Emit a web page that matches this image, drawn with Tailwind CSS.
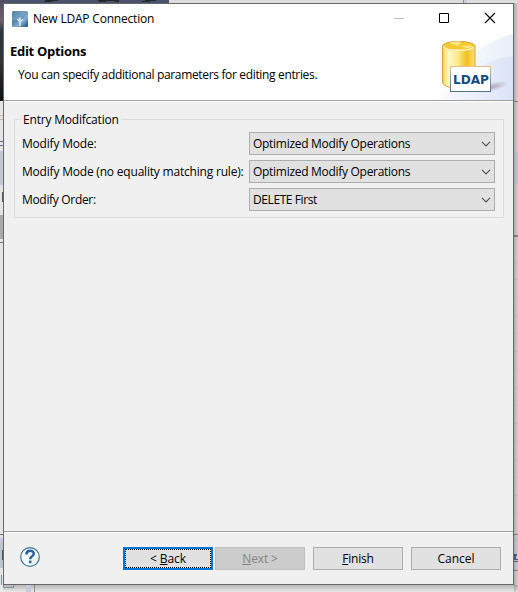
<!DOCTYPE html>
<html lang="en">
<head>
<meta charset="utf-8">
<title>New LDAP Connection</title>
<script src="https://cdn.jsdelivr.net/npm/@tailwindcss/browser@4"></script>
</head>
<body class="w-[518px] h-[592px] overflow-hidden relative bg-[#dcdcdc] font-['Open_Sans','Noto_Sans',sans-serif] text-[12px] leading-[16px] text-black">
<!-- desktop behind the dialog -->
<svg class="absolute inset-0" width="518" height="592" shape-rendering="crispEdges">
  <defs>
    <linearGradient id="sky" x1="0" x2="0" y1="0" y2="1"><stop offset="0" stop-color="#514c60"/><stop offset=".2" stop-color="#6e606b"/><stop offset=".32" stop-color="#29343b"/><stop offset=".6" stop-color="#343338"/><stop offset="1" stop-color="#0d1010"/></linearGradient>
    <linearGradient id="shade" x1="0" x2="1" y1="0" y2="0"><stop offset="0" stop-color="#000" stop-opacity=".16"/><stop offset="1" stop-color="#000" stop-opacity="0"/></linearGradient>
    <linearGradient id="shadeB" x1="0" x2="0" y1="0" y2="1"><stop offset="0" stop-color="#000" stop-opacity=".22"/><stop offset="1" stop-color="#000" stop-opacity="0"/></linearGradient>
  </defs>
  <path fill="#e9e9e9" d="M0 0h518v592H0z"/>
  <path fill="#48536b" d="M0 0h169v3H0z"/>
  <path fill="#25272b" d="M46 0h12v1h-6v1h-9zM97 0h22v2h-4v-1h-9v1h-7zM146 0h10v1h-6v1h-9z"/>
  <path fill="url(#sky)" d="M0 0h4v101H0z"/>
  <path fill="#ddd" d="M169 0h349v3H169z"/>
  <path fill="#8e8e96" d="M463 0h1v3h-1z"/><path fill="#c9cbd8" d="M464 0h3v3h-3z"/>
  <path fill="#e4e4e4" d="M0 102h3v490H0z"/>
  <path fill="#c8bca8" d="M0 115h3v1H0zM0 119h3v1H0z"/><path fill="#687181" d="M0 141h3v1H0zM0 145h3v1H0z"/>
  <path fill="#c3c7d4" d="M0 151h3v34H0z"/>
  <path fill="#555" d="M2 192h1v10H2z"/><path fill="#a9a9a9" d="M0 215h3v24H0z"/><path fill="#777" d="M0 242h3v1H0zM0 534h3v1H0z"/>
  <path fill="#c8cada" d="M0 538h3v5H0z"/><path fill="#b9c4cd" d="M0 543h3v25H0z"/><path fill="#555" d="M2 550h1v10H2z"/>
  <path fill="#d0d0d0" d="M514 3h4v589h-4z"/>
  <path fill="#8a8a8a" d="M514 101h4v1h-4zM514 235h4v2h-4zM514 534h4v1h-4zM514 570h4v1h-4z"/>
  <path fill="#c6cad8" d="M514 151h4v33h-4zM514 538h4v4h-4z"/>
  <path fill="#c3c3c3" d="M514 262h4v1h-4zM514 279h4v1h-4zM514 297h4v1h-4zM514 315h4v1h-4zM514 333h4v1h-4zM514 351h4v1h-4zM514 369h4v1h-4zM514 387h4v1h-4zM514 405h4v1h-4zM514 423h4v1h-4zM514 441h4v1h-4zM514 459h4v1h-4zM514 477h4v1h-4zM514 495h4v1h-4zM514 513h4v1h-4z"/>
  <path fill="#c9cad7" d="M514 543h4v27h-4z"/>
  <path fill="#4b6696" d="M514 554h3v2h-1v3h2v1h-4zM514 561h4v1h-4z"/>
  <path fill="#e9e9e9" d="M0 585h518v7H0z"/>
  <path fill="url(#shade)" d="M514 3h4v589h-4z"/><path fill="url(#shadeB)" d="M3 585h515v7H3z"/>
  <path fill="#c5c8d8" d="M26 585h5v7h-5z"/><path fill="#858585" d="M34 585h1v7h-1z"/>
  <path fill="none" stroke="#7b929d" d="M1.500 575v10M3.500 585v2.500h10v-3"/>
</svg>

<main class="absolute left-[3px] top-[3px] w-[511px] h-[582px] border border-[#68686a] bg-[#f0f0f0] flex flex-col">
  <header class="relative h-[96px] bg-white flex flex-col shrink-0">
    <svg class="absolute right-0 top-0" width="150" height="96" viewBox="363 4 150 96">
      <defs>
        <linearGradient id="w1" x1="0" x2="1" y1="0" y2="0"><stop offset="0" stop-color="#fff"/><stop offset="1" stop-color="#e9effa"/></linearGradient>
        <linearGradient id="w2" x1="0" x2="1" y1="0" y2="0"><stop offset="0" stop-color="#f8faff"/><stop offset="1" stop-color="#dbe3f6"/></linearGradient>
        <linearGradient id="gold" x1="0" x2="1" y1="0" y2="0"><stop offset="0" stop-color="#f7c93c"/><stop offset=".08" stop-color="#fbe589"/><stop offset=".2" stop-color="#fff9c6"/><stop offset=".48" stop-color="#fbe98a"/><stop offset=".75" stop-color="#f2bf1c"/><stop offset="1" stop-color="#fbe27a"/></linearGradient>
        <linearGradient id="edge" x1="0" x2="0" y1="0" y2="1"><stop offset="0" stop-color="#e9bd92"/><stop offset=".5" stop-color="#8a9a9e"/><stop offset="1" stop-color="#4f7382"/></linearGradient>
        <radialGradient id="shadow"><stop offset="0" stop-color="#998a9c" stop-opacity=".7"/><stop offset="1" stop-color="#998a9c" stop-opacity="0"/></radialGradient>
      </defs>
      <path fill="url(#w1)" d="M434 100C456 72 478 42 513 34V100z"/>
      <path fill="url(#w2)" d="M440 100C464 76 486 58 513 56V100z"/>
      <ellipse cx="492" cy="87" rx="17" ry="4.500" fill="url(#shadow)" transform="rotate(-14 492 87)"/>
      <path d="M442.500 46v36c0 3.500 6 6 16 6s16.500-2.500 16.500-6V46z" fill="url(#gold)" stroke="#e0a33a"/>
      <ellipse cx="458.700" cy="46" rx="16.200" ry="4.600" fill="#f3cb31" stroke="#e0a33a"/>
      <path d="M443.500 46.500c1 5 29 5 30.500 0" fill="none" stroke="#fff6c4" stroke-width="1.300"/>
      <path d="M458 46l-9-3c5-1.500 9-1.500 12-1.300zM459 46l10 2.500c2-1 3-2 3.500-3z" fill="#fae784"/>
      <rect x="450.500" y="66.500" width="40" height="25" fill="#fff" stroke="url(#edge)"/>
      <text x="453" y="84" textLength="36" lengthAdjust="spacingAndGlyphs" font-family="DejaVu Sans, sans-serif" font-weight="700" font-size="13" fill="#134a84">LDAP</text>
    </svg>
    <div class="relative h-[30px] flex items-center pl-[8px]">
      <svg width="16" height="16" viewBox="0 0 16 16">
        <defs><linearGradient id="app" x1="0" x2="1" y1="0" y2="1"><stop offset="0" stop-color="#2f618e"/><stop offset=".42" stop-color="#5488b2"/><stop offset=".65" stop-color="#86afd0"/><stop offset="1" stop-color="#154678"/></linearGradient></defs>
        <rect width="16" height="16" rx="1.500" fill="url(#app)"/>
        <path d="M0 10C5 9 11 6 15 0H2Q0 0 0 2z" fill="#c5dcec" opacity=".28"/>
        <path d="M8 15V9.500M8 11L5.500 8M8 10.500L11 8.500M8 9V6.500" fill="none" stroke="#e2edf6" stroke-width="1.500"/>
      </svg>
      <span class="ml-[5px] whitespace-nowrap tracking-[-0.2px]">New LDAP Connection</span>
      <svg class="absolute left-0 top-0" width="509" height="30" viewBox="4 4 509 30" fill="none">
        <path d="M394 18.500h10" stroke="#bcbcbc"/><path d="M439.500 13.500h9v9h-9z" stroke="#000"/><path d="M485 13l10 10M495 13l-10 10" stroke="#000" stroke-width="1.100"/>
      </svg>
    </div>
    <h1 class="relative mt-[9px] ml-[6px] font-bold text-[13px] leading-[16px] tracking-[-0.3px]">Edit Options</h1>
    <p class="relative mt-[8px] ml-[14px] tracking-[-0.34px] whitespace-nowrap">You can specify additional parameters for editing entries.</p>
  </header>
  <div class="h-[2px] shrink-0 bg-white border-t border-[#a0a0a0]"></div>

  <section class="flex-1 pl-[10px] pt-[17px]">
    <fieldset class="relative w-[490px] h-[99px] border border-[#dcdcdc] pl-[7px] pt-[12px] flex flex-col gap-[5px]">
      <span class="absolute left-[6px] top-[-8px] px-[2px] bg-[#f0f0f0] whitespace-nowrap tracking-[-0.2px]">Entry Modifcation</span>
      <div class="flex items-center h-[23px]"><label class="w-[227px] whitespace-nowrap tracking-[-0.2px]">Modify Mode:</label><div class="w-[246px] h-[23px] border border-[#adadad] bg-[#e1e1e1] flex items-center justify-between pl-[3px] pr-[3px]"><span class="tracking-[-0.29px]">Optimized Modify Operations</span><svg width="10" height="6" viewBox="0 0 10 6" fill="none" stroke="#555" stroke-width="1.200"><path d="M1 .8l4 4 4-4"/></svg></div></div>
      <div class="flex items-center h-[23px]"><label class="w-[227px] whitespace-nowrap tracking-[-0.2px]">Modify Mode (no equality matching rule):</label><div class="w-[246px] h-[23px] border border-[#adadad] bg-[#e1e1e1] flex items-center justify-between pl-[3px] pr-[3px]"><span class="tracking-[-0.29px]">Optimized Modify Operations</span><svg width="10" height="6" viewBox="0 0 10 6" fill="none" stroke="#555" stroke-width="1.200"><path d="M1 .8l4 4 4-4"/></svg></div></div>
      <div class="flex items-center h-[23px]"><label class="w-[227px] whitespace-nowrap tracking-[-0.32px]">Modify Order:</label><div class="w-[246px] h-[23px] border border-[#adadad] bg-[#e1e1e1] flex items-center justify-between pl-[3px] pr-[3px]"><span class="tracking-[-0.42px]">DELETE First</span><svg width="10" height="6" viewBox="0 0 10 6" fill="none" stroke="#555" stroke-width="1.200"><path d="M1 .8l4 4 4-4"/></svg></div></div>
    </fieldset>
  </section>

  <div class="h-[2px] shrink-0 bg-white border-t border-[#a0a0a0]"></div>
  <footer class="h-[51px] shrink-0 flex pt-[14px] pl-[16px]">
    <svg width="20" height="21" viewBox="0 0 20 21">
      <circle cx="10" cy="10" r="9.300" fill="#f5f9fb" stroke="#3d739d" stroke-width="1.200"/>
      <path d="M6.400 7.500c0-5 7.400-4.600 7.400-.7 0 2.500-3.600 2.500-3.600 5.400" fill="none" stroke="#2763a0" stroke-width="2.400"/><path d="M8.900 13.600h2.600v2.600H8.900z" fill="#2763a0"/>
    </svg>
    <button class="ml-[83px] w-[90px] h-[23px] bg-[#0078d7] p-[2px]"><span class="flex h-full items-center justify-center border border-dotted border-black bg-[#e1e1e1]"><span class="tracking-[-0.1px]">&lt; <u>B</u>ack</span></span></button>
    <button class="ml-[2px] w-[90px] h-[23px] border border-[#bfbfbf] bg-[#ccc] text-[#838383] tracking-[-0.15px]"><u>N</u>ext &gt;</button>
    <button class="ml-[8px] w-[90px] h-[23px] border border-[#adadad] bg-[#e1e1e1] tracking-[-0.2px]"><u>F</u>inish</button>
    <button class="ml-[8px] w-[90px] h-[23px] border border-[#adadad] bg-[#e1e1e1]">Cancel</button>
  </footer>
</main>
</body>
</html>
